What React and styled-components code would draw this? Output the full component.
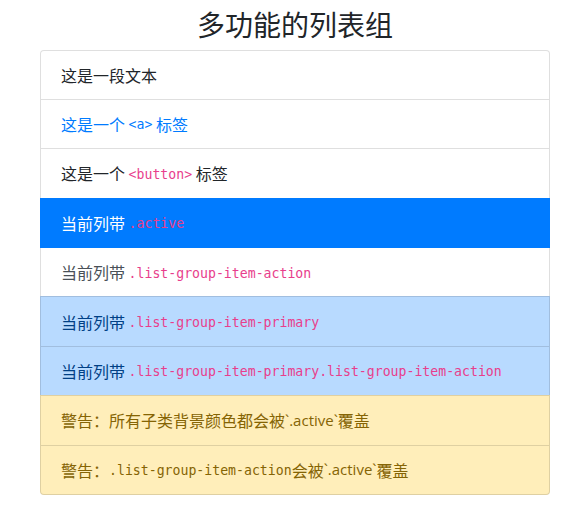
import React from "react";
import styled, { createGlobalStyle, css } from "styled-components";

const Global = createGlobalStyle`
  html, body { margin: 0; padding: 0; background: #fff; }
  body {
    font-family: "Noto Sans CJK SC", "Noto Sans", sans-serif;
    font-size: 16px;
    line-height: 24px;
    color: #212529;
  }
`;

const Page = styled.div`
  width: 510px;
  margin-left: 40px;
  padding-top: 7px;
`;

const Title = styled.h3`
  margin: 0 0 8.5px;
  font-size: 28px;
  line-height: 34px;
  height: 34px;
  font-weight: 400;
  text-align: center;
  color: #212529;
`;

const Group = styled.div`
  display: flex;
  flex-direction: column;
`;

const variants = {
  plain: css`color: #212529; background: #fff;`,
  link: css`color: #007bff; background: #fff;`,
  active: css`color: #fff; background: #007bff; border-color: #007bff; z-index: 2;`,
  action: css`color: #495057; background: #fff;`,
  primary: css`color: #004085; background: #b8daff;`,
  warning: css`color: #856404; background: #ffeeba;`,
};

const Item = styled.div`
  position: relative;
  display: flex;
  align-items: center;
  height: 24.4px;
  padding: 12px 20px;
  border: 1px solid rgba(0, 0, 0, 0.125);
  margin-bottom: -1px;
  line-height: 24px;
  white-space: pre;
  overflow: hidden;
  ${(p) => variants[p.$v || "plain"]}
  &:first-child { border-top-left-radius: 4px; border-top-right-radius: 4px; }
  &:last-child { border-bottom-left-radius: 4px; border-bottom-right-radius: 4px; margin-bottom: 0; }
`;

const Code = styled.code`
  font-family: "DejaVu Sans Mono", "Liberation Mono", monospace;
  font-size: 13.2px;
  line-height: 1;
  padding-top: 2px;
  color: ${(p) => (p.$inherit ? "inherit" : "#e83e8c")};
`;

const Latin = styled.span`
  font-family: "Open Sans", "Noto Sans", sans-serif;
  font-size: 15px;
  line-height: 1;
`;

export default function App() {
  return (
    <>
      <Global />
      <Page>
        <Title>多功能的列表组</Title>
        <Group>
          <Item>这是一段文本</Item>
          <Item $v="link">
            这是一个 <Code $inherit>&lt;a&gt;</Code> 标签
          </Item>
          <Item>
            这是一个 <Code>&lt;button&gt;</Code> 标签
          </Item>
          <Item $v="active">
            当前列带 <Code>.active</Code>
          </Item>
          <Item $v="action">
            当前列带 <Code>.list-group-item-action</Code>
          </Item>
          <Item $v="primary">
            当前列带 <Code>.list-group-item-primary</Code>
          </Item>
          <Item $v="primary">
            当前列带 <Code>.list-group-item-primary.list-group-item-action</Code>
          </Item>
          <Item $v="warning">
            警告：所有子类背景颜色都会被<Latin>`.active`</Latin>覆盖
          </Item>
          <Item $v="warning">
            警告：<Code $inherit>.list-group-item-action</Code>会被<Latin>`.active`</Latin>覆盖
          </Item>
        </Group>
      </Page>
    </>
  );
}
